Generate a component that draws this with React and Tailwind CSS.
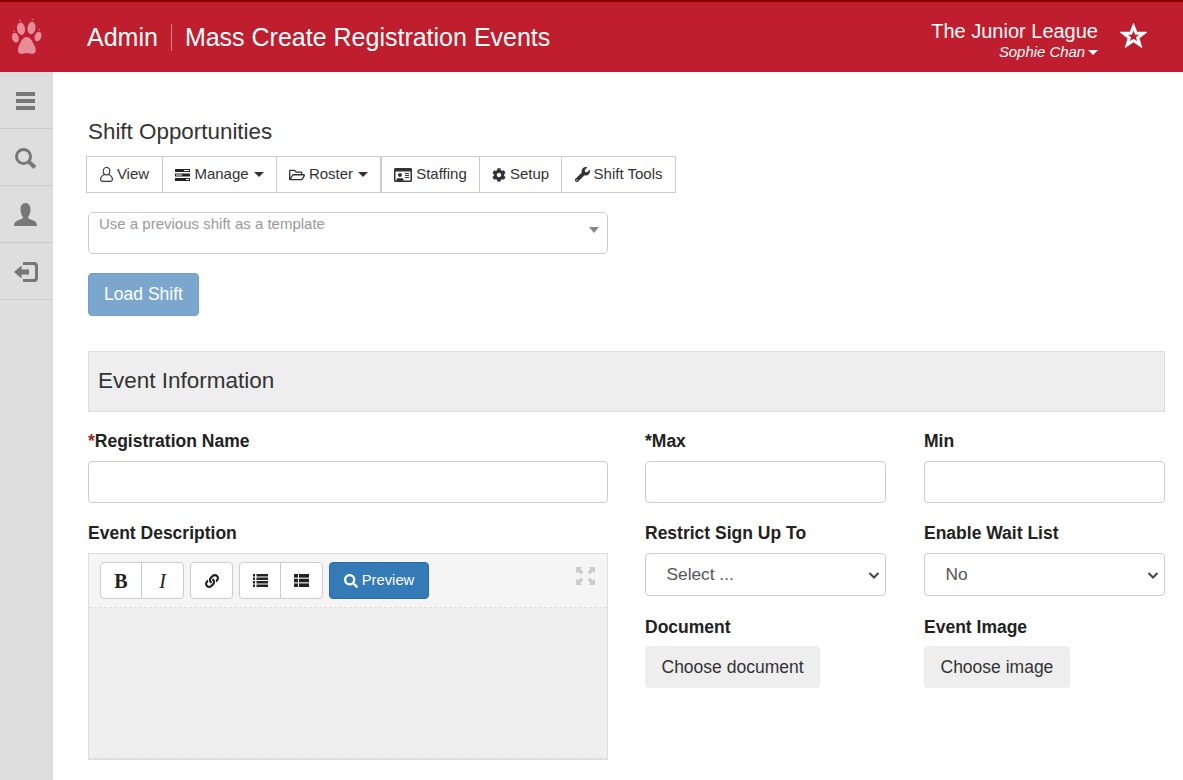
import React from 'react';
import { FaLink, FaSearch, FaCog, FaWrench, FaRegFolderOpen, FaRegIdCard } from 'react-icons/fa';

const Caret = ({ className = '' }) => (
  <span className={`inline-block w-0 h-0 border-x-[5px] border-x-transparent border-t-[5px] border-t-current ${className}`} />
);

const Paw = () => (
  <svg width="32" height="38" viewBox="0 0 32 38" fill="#e68d98">
    <ellipse cx="4.400" cy="19.700" rx="3.300" ry="5" transform="rotate(-15 4.400 19.700)" />
    <ellipse cx="10" cy="10.700" rx="4" ry="6.300" transform="rotate(-8 10 10.700)" />
    <ellipse cx="20.500" cy="10" rx="4" ry="6.300" transform="rotate(8 20.500 10)" />
    <ellipse cx="27" cy="18.500" rx="3.300" ry="5" transform="rotate(18 27 18.500)" />
    <circle cx="3.300" cy="13" r="0.800" />
    <circle cx="9" cy="2.500" r="0.800" />
    <circle cx="21.500" cy="1.500" r="0.800" />
    <circle cx="28.500" cy="11.500" r="0.800" />
    <path d="M15.700 19C12.500 19 10.500 22 9 25.500 7.800 28 6.500 30 7 33 7.500 36 11 36.500 15.700 35 20.500 36.500 24 36 24.700 33 25.200 30 23.700 28 22.300 25.500 20.800 22 18.800 19 15.700 19Z" />
  </svg>
);

const Hamburger = () => (
  <svg width="19" height="18" viewBox="0 0 19 18" fill="#777">
    <rect width="19" height="4" />
    <rect y="7" width="19" height="4" />
    <rect y="14" width="19" height="4" />
  </svg>
);

const SideSearch = () => (
  <svg width="22" height="21" viewBox="0 0 22 21" fill="none" stroke="#777">
    <circle cx="8.500" cy="8.500" r="7" strokeWidth="3" />
    <path d="M13.500 13.500 20 19.500" strokeWidth="4" />
  </svg>
);

const SideUser = () => (
  <svg width="23" height="23" viewBox="0 0 23 23" fill="#777">
    <path d="M11.500 0C8 0 6.500 3 6.500 6.500 6.500 10 8 13 9 14.200 9 15.800 6 16.500 3.500 17.500 1 18.500 0 20.500 0 23H23C23 20.500 22 18.500 19.500 17.500 17 16.500 14 15.800 14 14.200 15 13 16.500 10 16.500 6.500 16.500 3 15 0 11.500 0Z" />
  </svg>
);

// glyphicon-log-in style: arrow going into a bracket
const LogIn = () => (
  <svg width="24" height="20" viewBox="0 0 24 20" fill="#777">
    <path d="M0 10 7.500 3.500V7.500H15V12.500H7.500V16.500Z" />
    <path d="M9 0H20A4 4 0 0 1 24 4V16A4 4 0 0 1 20 20H9V17H19.500A1.500 1.500 0 0 0 21 15.500V4.500A1.500 1.500 0 0 0 19.500 3H9Z" />
  </svg>
);

const Star = () => (
  <svg width="27" height="25" viewBox="0 0 27 25" fill="none" stroke="#fff" strokeWidth="3">
    <path d="M13.500 3.500 16.200 10.300H23.500L17.700 14.700 19.800 21.800 13.500 17.600 7.200 21.800 9.300 14.700 3.500 10.300H10.800Z" />
  </svg>
);

const OutlineUser = () => (
  <svg width="13" height="15" viewBox="0 0 13 15" fill="none" stroke="#333" strokeWidth="1.100">
    <ellipse cx="6.500" cy="4.200" rx="3.300" ry="3.700" />
    <path d="M4.500 7.500C2 8.500.6 10 .6 12.300.6 13.800 1.500 14.400 3 14.400H10C11.500 14.400 12.400 13.800 12.400 12.300 12.400 10 11 8.500 8.500 7.500" />
  </svg>
);

const Tasks = () => (
  <svg width="15" height="12" viewBox="0 0 15 12" fill="#222">
    <rect width="15" height="3" />
    <rect x="9" y="1" width="5" height="1" fill="#fff" />
    <rect y="4.500" width="15" height="3" />
    <rect x="1" y="5.500" width="6" height="1" fill="#fff" />
    <rect y="9" width="15" height="3" />
    <rect x="11" y="10" width="3" height="1" fill="#fff" />
  </svg>
);

const ListSmall = () => (
  <svg width="15" height="13" viewBox="0 0 15 13" fill="#222">
    {[0, 3.500, 7, 10.500].map(y => (
      <g key={y}>
        <rect y={y} width="2" height="2.500" />
        <rect x="3.500" y={y} width="11.500" height="2.500" />
      </g>
    ))}
  </svg>
);

const ListLarge = () => (
  <svg width="15" height="13" viewBox="0 0 15 13" fill="#222">
    {[0, 4.700, 9.400].map(y => (
      <g key={y}>
        <rect y={y} width="4" height="3.600" />
        <rect x="5" y={y} width="10" height="3.600" />
      </g>
    ))}
  </svg>
);

const Fullscreen = () => (
  <svg width="19" height="18" viewBox="0 0 19 18" fill="#ccc">
    <path d="M0 0H6.500L4.500 2 7.500 5 5 7.500 2 4.500 0 6.500Z" />
    <path d="M19 0H12.500L14.500 2 11.500 5 14 7.500 17 4.500 19 6.500Z" />
    <path d="M0 18H6.500L4.500 16 7.500 13 5 10.500 2 13.500 0 11.500Z" />
    <path d="M19 18H12.500L14.500 16 11.500 13 14 10.500 17 13.500 19 11.500Z" />
  </svg>
);

function SideItem({ children }) {
  return (
    <div className="h-[57px] flex items-center justify-center border-b border-[#c9c9c9]">
      {children}
    </div>
  );
}

function ToolbarTab({ icon, label, caret, width }) {
  return (
    <div className={`h-full flex items-center justify-center gap-[4px] border-r border-[#ccc] last:border-r-0 ${width}`}>
      {icon}
      <span>{label}</span>
      {caret && <Caret className="ml-[1px]" />}
    </div>
  );
}

function Field({ label, req, children }) {
  return (
    <div>
      <label className="block font-bold text-[17.500px] leading-[20px] text-[#222] mb-[10px]">
        {req && <span className="text-[#9c2a2a]">*</span>}
        {label}
      </label>
      {children}
    </div>
  );
}

const inputCls = 'block w-full h-[42px] border border-[#ccc] rounded-[4px] bg-white';

function FakeSelect({ text }) {
  return (
    <div className="h-[43px] border border-[#ccc] rounded-[4px] bg-white flex items-center justify-between pl-[20.500px] pr-[4px] text-[17.300px] text-[#555]">
      <span>{text}</span>
      <svg width="14" height="14" viewBox="0 0 14 14" fill="none" stroke="#444" strokeWidth="2">
        <path d="M2.500 5 7 9.500 11.500 5" />
      </svg>
    </div>
  );
}

const EdBtn = ({ children, className = '' }) => (
  <div className={`h-[37px] flex items-center justify-center bg-white border border-[#ccc] text-[#222] ${className}`}>
    {children}
  </div>
);

const FileBtn = ({ children }) => (
  <div className="w-fit h-[42px] -mt-px px-[16.500px] flex items-center rounded-[4px] bg-[#eee] text-[17.500px] text-[#333]">
    {children}
  </div>
);

export default function App() {
  return (
    <div className="h-[780px] overflow-hidden bg-white font-['Liberation_Sans',Arial,sans-serif] text-[#333]">
      <header className="h-[72px] bg-[#be1e2e] border-t-2 border-[#8f0000] flex items-center text-white">
        <div className="w-[53px] flex justify-center">
          <Paw />
        </div>
        <div className="pl-[34px] flex items-center">
          <span className="text-[25px] leading-[28px] pr-[13px]">Admin</span>
          <span className="w-px h-[27px] bg-[#dc8b93]" />
          <span className="text-[25px] leading-[28px] pl-[13px]">Mass Create Registration Events</span>
        </div>
        <div className="ml-auto flex items-center pr-[36px]">
          <div className="text-right pt-[6px]">
            <div className="text-[20px] leading-[24px] pr-[1px]">The Junior League</div>
            <div className="text-[14.900px] leading-[19px] italic flex items-center justify-end gap-[3px] pr-[1px]">
              Sophie Chan <Caret />
            </div>
          </div>
          <div className="ml-[21px] mb-[4px]"><Star /></div>
        </div>
      </header>

      <div className="flex h-[708px]">
        <aside className="w-[53px] shrink-0 bg-[#dedede]">
          <SideItem><div className="pt-[2px] pr-[2px]"><Hamburger /></div></SideItem>
          <SideItem><div className="pt-[2px] pr-[2px]"><SideSearch /></div></SideItem>
          <SideItem><div className="pr-[2px]"><SideUser /></div></SideItem>
          <SideItem><div className="pt-[2px] pr-[2px]"><LogIn /></div></SideItem>
        </aside>

        <main className="flex-1 pl-[35px] pr-[18px] pt-[47px]">
          <h2 className="text-[22.400px] leading-[26px] text-[#333]">Shift Opportunities</h2>

          <div className="mt-[11px] -ml-[2px] w-fit h-[37px] flex items-center border border-[#ccc] text-[15px] text-[#333]">
            <ToolbarTab width="w-[76px]" icon={<OutlineUser />} label="View" />
            <ToolbarTab width="w-[114px]" icon={<Tasks />} label="Manage" caret />
            <ToolbarTab width="w-[105px] border-r-2" icon={<FaRegFolderOpen size={16} />} label="Roster" caret />
            <ToolbarTab width="w-[98px]" icon={<FaRegIdCard size={18} />} label="Staffing" />
            <ToolbarTab width="w-[82px]" icon={<FaCog size={14} />} label="Setup" />
            <ToolbarTab width="w-[113px]" icon={<FaWrench size={15} />} label="Shift Tools" />
          </div>

          <div className="relative mt-[19px] w-[520px] h-[42px] border border-[#ccc] rounded-[5px] px-[10px] pt-[1px] text-[15px] leading-[20px] text-[#999]">
            Use a previous shift as a template
            <span className="absolute right-[8px] top-[14px] w-0 h-0 border-x-[5px] border-x-transparent border-t-[6px] border-t-[#888]" />
          </div>

          <button className="mt-[19px] h-[43px] w-[111px] rounded-[4px] bg-[#7ba7cf] border border-[#6f9fc9] text-white text-[17.500px] block">
            Load Shift
          </button>

          <div className="mt-[35px] h-[61px] bg-[#eee] border border-[#ddd] flex items-center pl-[9px] pb-[2px] text-[22.500px] text-[#333]">
            Event Information
          </div>

          <div className="mt-[19px] grid grid-cols-[520px_241px_242px] gap-x-[37px]">
            <div>
              <Field label="Registration Name" req>
                <div className={inputCls} />
              </Field>
              <div className="mt-[20px]">
                <Field label="Event Description">
                  <div className="h-[207px] border border-[#ddd] bg-[#f5f5f5] flex flex-col">
                    <div className="h-[54px] shrink-0 relative flex items-start gap-[6px] pl-[11px] pt-[8px] border-b border-dashed border-[#ddd]">
                      <div className="flex">
                        <EdBtn className="w-[42px] rounded-l-[4px] font-['Liberation_Serif',serif] font-bold text-[20px]">B</EdBtn>
                        <EdBtn className="w-[43px] -ml-px rounded-r-[4px] font-['Liberation_Serif',serif] italic text-[20px]">I</EdBtn>
                      </div>
                      <EdBtn className="w-[43px] rounded-[4px]"><FaLink size={14} /></EdBtn>
                      <div className="flex">
                        <EdBtn className="w-[42px] rounded-l-[4px]"><ListSmall /></EdBtn>
                        <EdBtn className="w-[43px] -ml-px rounded-r-[4px]"><ListLarge /></EdBtn>
                      </div>
                      <div className="h-[37px] w-[100px] flex items-center justify-center gap-[4px] rounded-[4px] bg-[#337ab7] border border-[#2e6da4] text-white text-[14.800px]">
                        <FaSearch size={14} /> Preview
                      </div>
                      <div className="absolute right-[12px] top-[13px]"><Fullscreen /></div>
                    </div>
                    <div className="flex-1 bg-[#eee] border-b border-dashed border-[#ddd]" />
                  </div>
                </Field>
              </div>
            </div>

            <div>
              <Field label="*Max"><div className={inputCls} /></Field>
              <div className="mt-[20px]">
                <Field label="Restrict Sign Up To"><FakeSelect text="Select ..." /></Field>
              </div>
              <div className="mt-[21px]">
                <Field label="Document">
                  <FileBtn>Choose document</FileBtn>
                </Field>
              </div>
            </div>

            <div className="ml-px">
              <Field label="Min"><div className={inputCls} /></Field>
              <div className="mt-[20px]">
                <Field label="Enable Wait List"><FakeSelect text="No" /></Field>
              </div>
              <div className="mt-[21px]">
                <Field label="Event Image">
                  <FileBtn>Choose image</FileBtn>
                </Field>
              </div>
            </div>
          </div>
        </main>
      </div>
    </div>
  );
}
